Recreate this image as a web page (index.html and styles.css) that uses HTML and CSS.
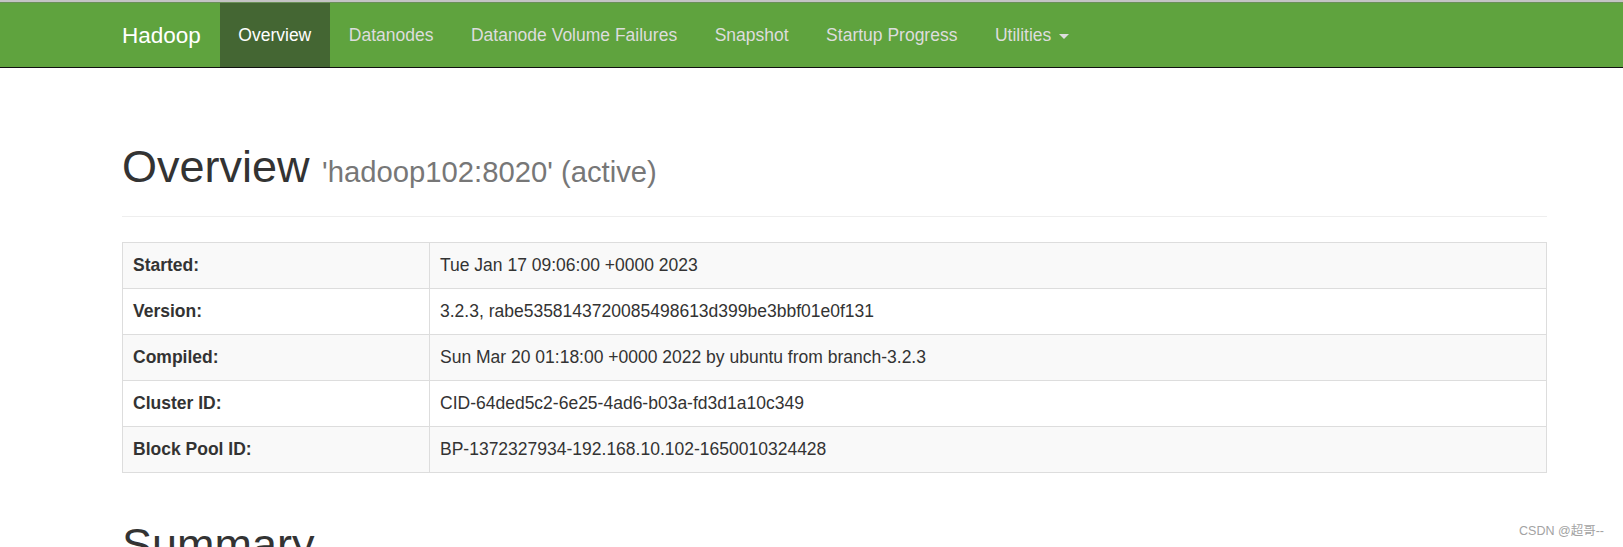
FILE: index.html
```html
<!DOCTYPE html>
<html lang="en">
<head>
<meta charset="utf-8">
<title>Namenode information</title>
<link rel="stylesheet" href="styles.css">
</head>
<body>
<div class="topstrip"></div>
<header class="navbar">
  <div class="container nav-inner">
    <div class="brand">Hadoop</div>
    <ul class="nav">
      <li class="active"><a href="#tab-overview">Overview</a></li>
      <li><a href="#tab-datanode">Datanodes</a></li>
      <li><a href="#tab-datanode-volume-failures">Datanode Volume Failures</a></li>
      <li><a href="#tab-snapshot">Snapshot</a></li>
      <li><a href="#tab-startup-progress">Startup Progress</a></li>
      <li><a href="#">Utilities <span class="caret"></span></a></li>
    </ul>
  </div>
</header>
<main class="container">
  <div class="page-header first">
    <h1>Overview <small>'hadoop102:8020' (active)</small></h1>
  </div>
  <table class="info">
    <tbody>
      <tr><th>Started:</th><td>Tue Jan 17 09:06:00 +0000 2023</td></tr>
      <tr><th>Version:</th><td>3.2.3, rabe5358143720085498613d399be3bbf01e0f131</td></tr>
      <tr><th>Compiled:</th><td>Sun Mar 20 01:18:00 +0000 2022 by ubuntu from branch-3.2.3</td></tr>
      <tr><th>Cluster ID:</th><td>CID-64ded5c2-6e25-4ad6-b03a-fd3d1a10c349</td></tr>
      <tr><th>Block Pool ID:</th><td>BP-1372327934-192.168.10.102-1650010324428</td></tr>
    </tbody>
  </table>
  <div class="page-header second">
    <h1>Summary</h1>
  </div>
</main>
<div class="watermark">CSDN @超哥--</div>
</body>
</html>
```

FILE: styles.css
```css
html, body {
  margin: 0;
  padding: 0;
  overflow: hidden;
  height: 547px;
}
body {
  font-family: "Liberation Sans", Arial, "Noto Sans CJK SC", sans-serif;
  font-size: 17.5px;
  line-height: 1.4286;
  color: #333;
  background: #fff;
  position: relative;
}
.topstrip {
  height: 2px;
  background: #c4c4c4;
}
.container {
  width: 1425px;
  margin-left: 122px;
}
.navbar {
  background: #5fa33e;
  border-top: 1px solid #6a8f58;
  border-bottom: 1px solid #111;
  height: 64px;
}
.nav-inner {
  display: flex;
  height: 64px;
}
.brand {
  color: #fff;
  font-size: 22.5px;
  line-height: 25px;
  padding: 20px 18.75px 19px 0;
}
.nav {
  display: flex;
  list-style: none;
  margin: 0;
  padding: 0;
}
.nav li a {
  display: block;
  padding: 19.75px 18.75px 19.25px;
  line-height: 25px;
  color: #ddd;
  text-decoration: none;
}
.nav li.active a {
  background: #446633;
  color: #fff;
}
.caret {
  display: inline-block;
  width: 0;
  height: 0;
  margin-left: 2.5px;
  vertical-align: middle;
  border-top: 5px solid;
  border-left: 5px solid transparent;
  border-right: 5px solid transparent;
}
.page-header {
  border-bottom: 1px solid #eee;
  padding-bottom: 11.25px;
}
.page-header.first {
  margin-top: 74.4px;
  margin-bottom: 25px;
}
.page-header.second {
  margin-top: 47px;
}
h1 {
  margin: 0 0 12.5px;
  font-size: 45px;
  font-weight: 500;
  line-height: 1.1;
  color: #333;
}
h1 small {
  font-size: 65%;
  font-weight: normal;
  color: #777;
}
.info {
  width: 100%;
  border-collapse: collapse;
  border: 1px solid #ddd;
}
.info th, .info td {
  border: 1px solid #ddd;
  padding: 10px;
  text-align: left;
  line-height: 25px;
  vertical-align: top;
}
.info th {
  width: 286px;
  font-weight: bold;
}
.info tr:nth-child(odd) {
  background: #f9f9f9;
}
.watermark {
  position: absolute;
  right: 19px;
  top: 523px;
  font-size: 12.5px;
  line-height: 16px;
  color: #a3a3a3;
}
```
